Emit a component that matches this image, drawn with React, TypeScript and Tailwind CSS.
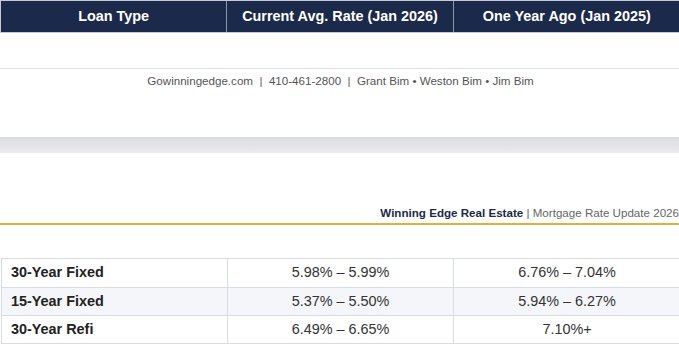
import * as React from "react";

type Row = { type: string; current: string; ago: string };

const rows: Row[] = [
  { type: "30-Year Fixed", current: "5.98% – 5.99%", ago: "6.76% – 7.04%" },
  { type: "15-Year Fixed", current: "5.37% – 5.50%", ago: "5.94% – 6.27%" },
  { type: "30-Year Refi", current: "6.49% – 6.65%", ago: "7.10%+" },
];

export default function App() {
  return (
    <div className="w-[679px] h-[348px] overflow-hidden bg-white font-['Liberation_Sans',Arial,sans-serif]">
      <div className="w-[681px]">
        {/* header strip */}
        <div className="grid grid-cols-3 h-[33px] bg-[#1b2a4b] border border-[#c5cbd6] text-white text-[14.4px] font-bold">
          <div className="flex items-center justify-center border-r border-[#8c96a8]">Loan Type</div>
          <div className="flex items-center justify-center border-r border-[#8c96a8]">Current Avg. Rate (Jan 2026)</div>
          <div className="flex items-center justify-center">One Year Ago (Jan 2025)</div>
        </div>

        <div className="h-[35px]" />
        <div className="border-t border-[#dde2e8] pt-[3px] h-[69px] text-center text-[11.6px] text-[#555]">
          Gowinningedge.com &nbsp;|&nbsp; 410-461-2800 &nbsp;|&nbsp; Grant Bim • Weston Bim • Jim Bim
        </div>

        <div className="h-[16px] bg-gradient-to-b from-[#dcdddf] to-[#ebebed]" />

        <div className="h-[51px]" />
        <div className="border-b-2 border-[#e4ae42] h-[21px] pb-[2px] flex items-end justify-end text-[11.6px] pr-[2px]">
          <span className="font-bold text-[#1b2a4b]">Winning Edge Real Estate</span>
          <span className="text-[#666]">&nbsp;| Mortgage Rate Update 2026</span>
        </div>

        <div className="h-[33px]" />
        <div className="border border-[#d7dce4] ml-[1px]">
          {rows.map((r, i) => (
            <div
              key={r.type}
              className={
                "grid grid-cols-3 h-[28px] text-[14.4px] " +
                (i > 0 ? "border-t border-[#d7dce4] " : "") +
                (i === 1 ? "bg-[#f4f6f9]" : "bg-white")
              }
            >
              <div className="flex items-center pl-[9px] font-bold text-[#222] border-r border-[#d7dce4]">{r.type}</div>
              <div className="flex items-center justify-center text-[#333] border-r border-[#d7dce4]">{r.current}</div>
              <div className="flex items-center justify-center text-[#333]">{r.ago}</div>
            </div>
          ))}
        </div>
      </div>
    </div>
  );
}
